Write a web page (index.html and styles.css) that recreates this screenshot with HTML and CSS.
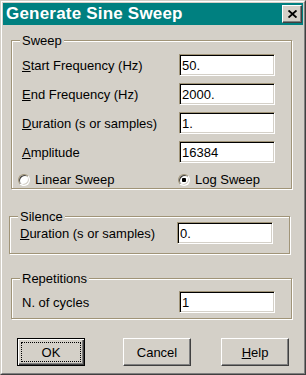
FILE: index.html
```html
<!DOCTYPE html>
<html lang="en">

<head>
    <meta charset="UTF-8">
    <meta name="viewport" content="width=device-width, initial-scale=1.0">
    <title>Generate Sine Sweep</title>
    <link rel="stylesheet" href="styles.css">
</head>

<body>

    <div class="window">
        <div class="frame">
            <div class="titlebar">
                <span class="title">Generate Sine Sweep</span>
                <button class="close" aria-label="Close">
                    <svg width="9" height="8" viewBox="0 0 9 8">
                        <path d="M0.5 0.5 L8.5 7.5 M8.5 0.5 L0.5 7.5" stroke="#000" stroke-width="1.9" fill="none" />
                    </svg>
                </button>
            </div>

            <div class="content">
                <div class="group sweep">
                    <div class="group-title">Sweep</div>
                    <div class="rows">
                        <div class="row">
                            <label><u>S</u>tart Frequency (Hz)</label>
                            <input type="text" class="field" value="50.">
                        </div>
                        <div class="row">
                            <label><u>E</u>nd Frequency (Hz)</label>
                            <input type="text" class="field" value="2000.">
                        </div>
                        <div class="row">
                            <label><u>D</u>uration (s or samples)</label>
                            <input type="text" class="field" value="1.">
                        </div>
                        <div class="row">
                            <label><u>A</u>mplitude</label>
                            <input type="text" class="field" value="16384">
                        </div>
                    </div>
                    <div class="options">
                        <span class="option"><span class="radio"></span>Linear Sweep</span>
                        <span class="option"><span class="radio checked"></span>Log Sweep</span>
                    </div>
                </div>

                <div class="group silence">
                    <div class="group-title">Silence</div>
                    <div class="row">
                        <label><u>D</u>uration (s or samples)</label>
                        <input type="text" class="field" value="0.">
                    </div>
                </div>

                <div class="group repetitions">
                    <div class="group-title">Repetitions</div>
                    <div class="row">
                        <label>N. of cycles</label>
                        <input type="text" class="field" value="1">
                    </div>
                </div>

                <div class="buttons">
                    <button class="btn default"><span class="focus">OK</span></button>
                    <button class="btn cancel">Cancel</button>
                    <button class="btn help"><u>H</u>elp</button>
                </div>
            </div>
        </div>
    </div>

</body>

</html>
```

FILE: styles.css
```css
body {
    margin: 0;
    font-family: "Liberation Sans", Arial, sans-serif;
    font-size: 13px;
    color: #000;
    background: #d4d0c8;
}

/* outer window frame: light / white on top-left, dark on bottom-right */
.window {
    width: 306px;
    height: 375px;
    box-sizing: border-box;
    border: 1px solid;
    border-color: #d4d0c8 #404040 #404040 #d4d0c8;
    background: #d4d0c8;
}

.frame {
    height: 100%;
    box-sizing: border-box;
    border: 1px solid;
    border-color: #fff #808080 #808080 #fff;
    padding: 1px;
}

.titlebar {
    height: 22px;
    background: #008080;
    display: flex;
    align-items: center;
    justify-content: space-between;
    padding-left: 3px;
    padding-right: 1px;
}

.title {
    color: #fff;
    font-weight: bold;
    font-size: 17px;
    letter-spacing: 0.2px;
    line-height: 22px;
}

.close {
    width: 20px;
    height: 18px;
    padding: 0;
    background: #d4d0c8;
    border: 1px solid;
    border-color: #fff #404040 #404040 #fff;
    box-shadow: inset -1px -1px #808080;
    display: flex;
    align-items: center;
    justify-content: center;
}

.close svg {
    display: block;
}

/* etched group boxes */
.group {
    width: 281px;
    box-sizing: border-box;
    border: 1px solid #a09478;
    box-shadow: 1px 1px 0 #fff, inset 1px 1px 0 #fff;
}

.group-title {
    width: fit-content;
    margin: -8px 0 0 8px;
    padding: 0 2px;
    line-height: 15px;
    background: #d4d0c8;
}

.sweep {
    margin: 15px 0 0 8px;
    padding-bottom: 2px;
}

.silence {
    margin: 27px 0 0 6px;
    padding-bottom: 9px;
}

.repetitions {
    margin: 24px 0 0 8px;
    padding-bottom: 5px;
}

.rows {
    margin-top: 6px;
    display: flex;
    flex-direction: column;
    gap: 7px;
}

.row {
    display: grid;
    grid-template-columns: 157px 96px;
    align-items: center;
    height: 22px;
    padding-left: 10px;
}

.silence .row {
    margin-top: -2px;
}

.repetitions .row {
    margin-top: 5px;
}

/* sunken edit boxes */
.field {
    width: 96px;
    height: 22px;
    box-sizing: border-box;
    margin: 0;
    padding: 0 2px;
    border: 1px solid;
    border-color: #a09478 #fff #fff #a09478;
    box-shadow: inset 1px 1px #000, inset -1px -1px #d4d0c8;
    background: #fff;
    font-family: "Liberation Sans", Arial, sans-serif;
    font-size: 13px;
    color: #000;
    outline: none;
}

.options {
    margin-top: 9px;
    height: 14px;
    padding-left: 6px;
    display: grid;
    grid-template-columns: 160px auto;
    align-items: center;
}

.option {
    display: flex;
    align-items: center;
}

.radio {
    width: 12px;
    height: 12px;
    box-sizing: border-box;
    margin-right: 5px;
    border-radius: 50%;
    border: 1px solid;
    border-color: #a09478 #fff #fff #a09478;
    box-shadow: inset 1px 1px #404040, inset -1px -1px #d4d0c8;
    background: #fff;
}

.radio.checked {
    background: radial-gradient(circle, #000 0, #000 2px, #fff 2.5px);
}

.buttons {
    margin-top: 19px;
    padding-left: 14px;
    display: flex;
}

.btn {
    width: 68px;
    height: 28px;
    padding: 0;
    background: #d4d0c8;
    border: 1px solid;
    border-color: #fff #404040 #404040 #fff;
    box-shadow: inset -1px -1px #808080, inset 1px 1px #d4d0c8;
    font-family: "Liberation Sans", Arial, sans-serif;
    font-size: 13px;
    color: #000;
}

/* default button: black outline around the normal bevel */
.btn.default {
    border: 1px solid #000;
    box-shadow: inset 1px 1px #fff, inset -1px -1px #404040, inset -2px -2px #808080;
    padding: 3px;
}

.focus {
    display: flex;
    align-items: center;
    justify-content: center;
    height: 100%;
    box-sizing: border-box;
    border: 1px dotted #000;
}

.cancel {
    margin-left: 38px;
}

.help {
    margin-left: 30px;
}
```
